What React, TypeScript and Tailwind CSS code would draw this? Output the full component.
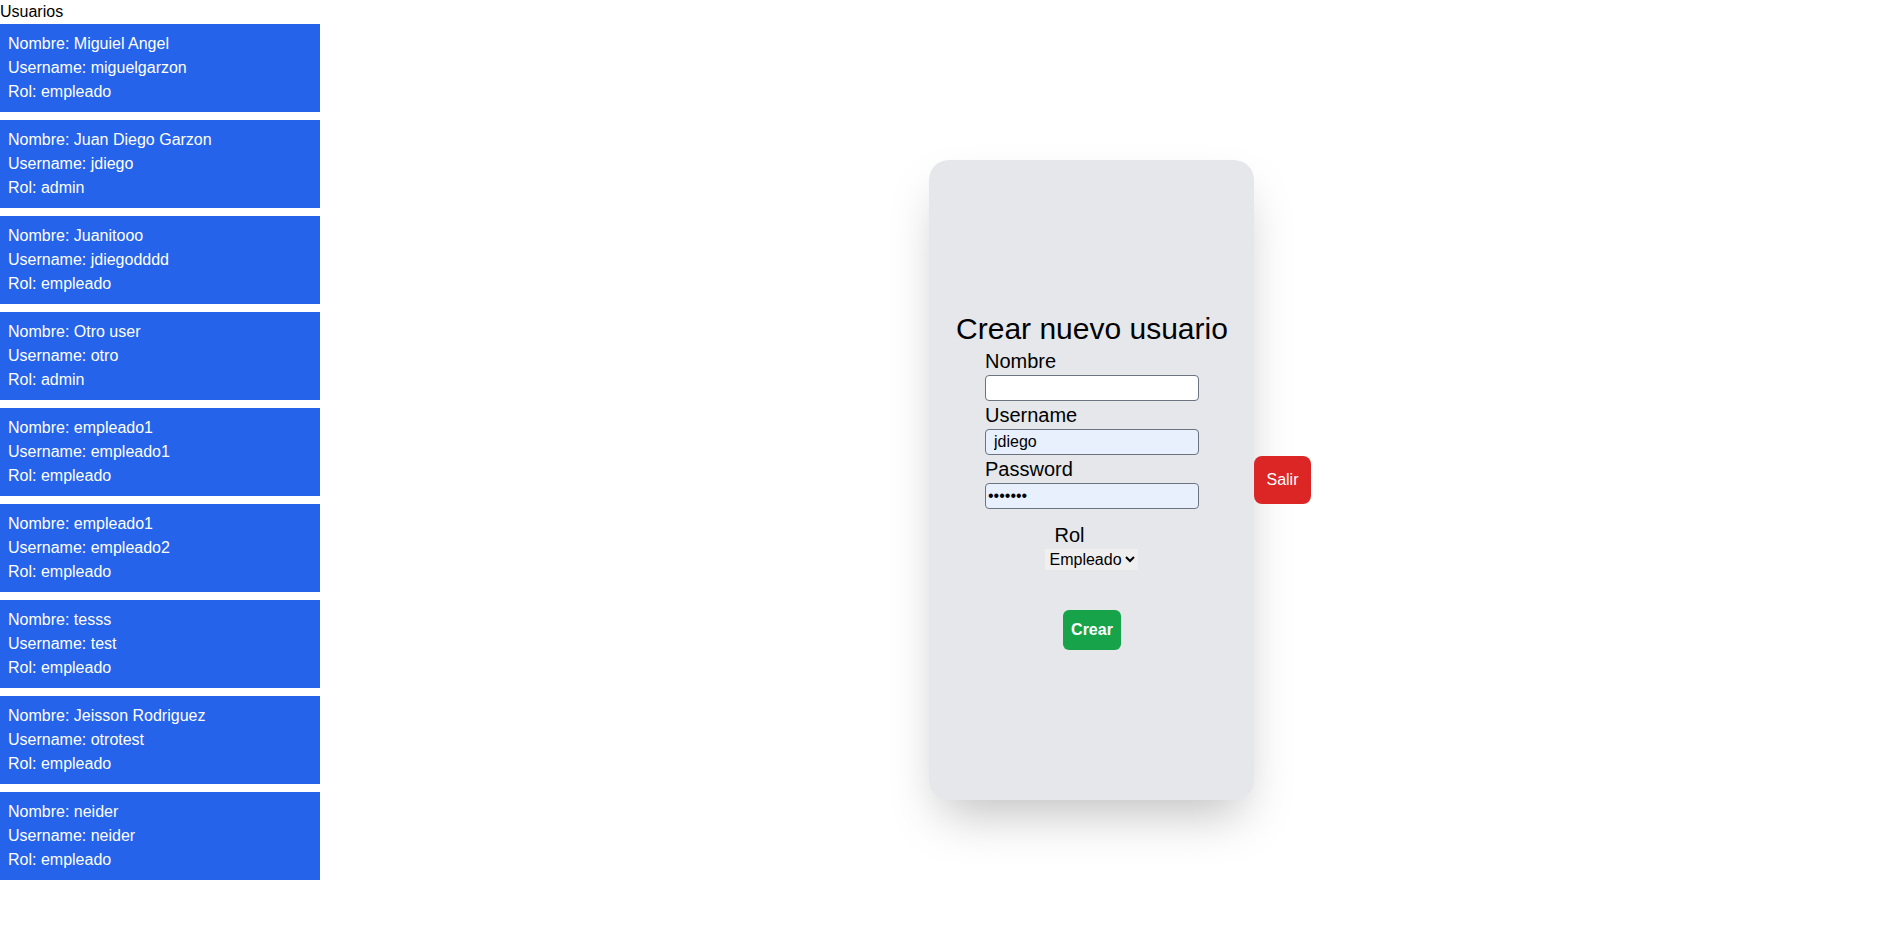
import { useState } from "react";

const usuarios = [
  { nombre: "Miguiel Angel", username: "miguelgarzon", rol: "empleado" },
  { nombre: "Juan Diego Garzon", username: "jdiego", rol: "admin" },
  { nombre: "Juanitooo", username: "jdiegodddd", rol: "empleado" },
  { nombre: "Otro user", username: "otro", rol: "admin" },
  { nombre: "empleado1", username: "empleado1", rol: "empleado" },
  { nombre: "empleado1", username: "empleado2", rol: "empleado" },
  { nombre: "tesss", username: "test", rol: "empleado" },
  { nombre: "Jeisson Rodriguez", username: "otrotest", rol: "empleado" },
  { nombre: "neider", username: "neider", rol: "empleado" },
];

export default function App() {
  const [rol, setRol] = useState("empleado");

  return (
    <div className="flex font-['Liberation_Sans',Arial,sans-serif] text-black">
      <div className="w-80 shrink-0">
        <h2 className="text-base leading-6">Usuarios</h2>
        <div className="flex flex-col gap-2">
          {usuarios.map((u, i) => (
            <div key={i} className="bg-[#2563eb] text-white p-2 leading-6">
              <p>Nombre: {u.nombre}</p>
              <p>Username: {u.username}</p>
              <p>Rol: {u.rol}</p>
            </div>
          ))}
        </div>
      </div>

      <div className="flex-1 flex justify-center items-start pt-[160px] pl-[37px]">
        <div className="flex items-center">
          <div className="w-[325px] h-[640px] bg-[#e5e7eb] rounded-[20px] shadow-2xl flex flex-col items-center justify-center">
            <h1 className="text-3xl">Crear nuevo usuario</h1>

            <div className="w-[214px] flex flex-col">
              <label className="text-xl leading-7 h-7">Nombre</label>
              <input
                type="text"
                className="h-[26px] border border-[#6b7280] rounded bg-white px-[2px] text-base"
              />
              <label className="text-xl leading-7 h-7">Username</label>
              <input
                type="text"
                defaultValue="jdiego"
                className="h-[26px] border border-[#6b7280] rounded bg-[#e8f0fe] pl-2 text-base"
              />
              <label className="text-xl leading-7 h-7">Password</label>
              <input
                type="password"
                defaultValue="1234567"
                className="h-[26px] border border-[#6b7280] rounded bg-[#e8f0fe] px-[2px] text-base"
              />
            </div>

            <div className="mt-3 flex flex-col items-start">
              <label className="text-xl leading-7 ml-[9px]">Rol</label>
              <select
                value={rol}
                onChange={(e) => setRol(e.target.value)}
                className="h-[21px] w-[93px] bg-[#efefef] text-base"
              >
                <option value="empleado">Empleado</option>
                <option value="admin">Admin</option>
              </select>
            </div>

            <button className="mt-10 bg-[#16a34a] text-white font-bold px-2 py-2 rounded-md">
              Crear
            </button>
          </div>

          <button className="bg-[#dc2626] text-white px-3 py-3 rounded-lg">
            Salir
          </button>
        </div>
      </div>
    </div>
  );
}
